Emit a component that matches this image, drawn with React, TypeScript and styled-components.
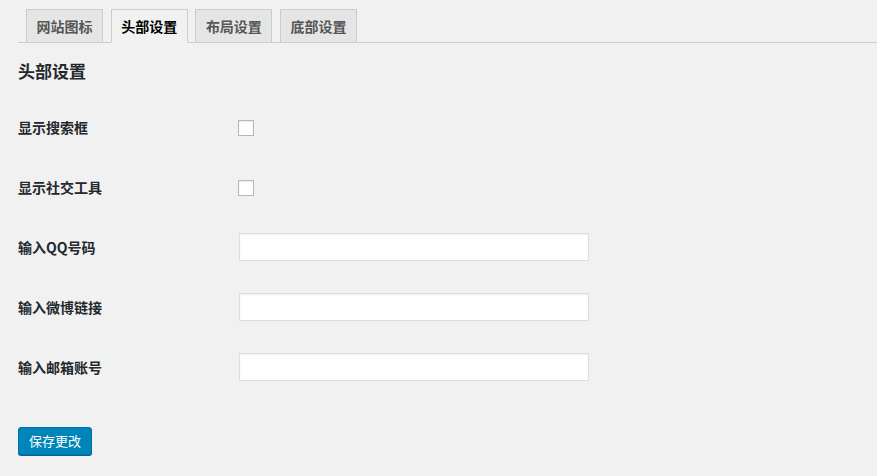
import React from "react";
import styled, { createGlobalStyle } from "styled-components";

const GlobalStyle = createGlobalStyle`
  html, body {
    margin: 0;
    padding: 0;
    background: #f1f1f1;
  }
  body {
    font-family: "Noto Sans CJK SC", "Liberation Sans", sans-serif;
    color: #23282d;
  }
`;

const Page = styled.div`
  width: 877px;
  height: 476px;
  padding-left: 18px;
  box-sizing: border-box;
  overflow: hidden;
`;

const TabBar = styled.div`
  display: flex;
  gap: 7.7px;
  margin-top: 9px;
  padding-left: 8px;
  border-bottom: 1px solid #ccc;
`;

const Tab = styled.div<{ $active?: boolean }>`
  height: 34px;
  box-sizing: border-box;
  padding: 0 9.5px;
  display: flex;
  align-items: center;
  font-size: 14px;
  font-weight: 700;
  line-height: 1;
  border: 1px solid #ccc;
  margin-bottom: -1px;
  background: ${(p) => (p.$active ? "#f1f1f1" : "#e5e5e5")};
  color: ${(p) => (p.$active ? "#000" : "#555")};
  border-bottom-color: ${(p) => (p.$active ? "#f1f1f1" : "#ccc")};
`;

const Heading = styled.h2`
  margin: 0;
  height: 54px;
  display: flex;
  align-items: center;
  font-size: 17px;
  font-weight: 700;
  color: #23282d;
`;

const Row = styled.div`
  display: flex;
  align-items: center;
  height: 60px;
`;

const Label = styled.div`
  width: 220px;
  font-size: 14px;
  font-weight: 700;
  color: #23282d;
`;

const Checkbox = styled.span`
  display: block;
  width: 16px;
  height: 16px;
  box-sizing: border-box;
  border: 1px solid #b4b9be;
  background: #fff;
  box-shadow: inset 0 1px 2px rgba(0, 0, 0, 0.1);
  margin-top: 2px;
`;

const TextInput = styled.input`
  width: 350px;
  height: 28px;
  box-sizing: border-box;
  margin: 0 0 0 1px;
  border: 1px solid #ddd;
  background: #fff;
  box-shadow: inset 0 1px 2px rgba(0, 0, 0, 0.07);
  outline: none;
  font-size: 14px;
`;

const Footer = styled.div`
  padding-top: 30px;
`;

const SaveButton = styled.button`
  height: 28px;
  padding: 0 10px;
  font-family: inherit;
  font-size: 13px;
  line-height: 26px;
  color: #fff;
  background: #0085ba;
  border: 1px solid #0073aa;
  border-radius: 3px;
  box-shadow: 0 1px 0 #006799;
  cursor: pointer;
`;

const tabs = ["网站图标", "头部设置", "布局设置", "底部设置"];

type Field = { label: string; kind: "checkbox" | "text" };

const fields: Field[] = [
  { label: "显示搜索框", kind: "checkbox" },
  { label: "显示社交工具", kind: "checkbox" },
  { label: "输入QQ号码", kind: "text" },
  { label: "输入微博链接", kind: "text" },
  { label: "输入邮箱账号", kind: "text" },
];

const App: React.FC = () => {
  return (
    <>
      <GlobalStyle />
      <Page>
        <TabBar>
          {tabs.map((t, i) => (
            <Tab key={t} $active={i === 1}>
              {t}
            </Tab>
          ))}
        </TabBar>
        <Heading>头部设置</Heading>
        {fields.map((f) => (
          <Row key={f.label}>
            <Label>{f.label}</Label>
            {f.kind === "checkbox" ? <Checkbox /> : <TextInput type="text" />}
          </Row>
        ))}
        <Footer>
          <SaveButton>保存更改</SaveButton>
        </Footer>
      </Page>
    </>
  );
};

export default App;
